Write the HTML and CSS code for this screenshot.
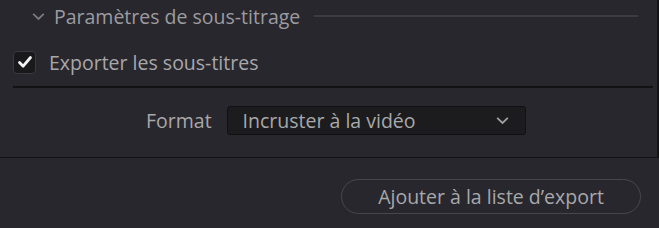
FILE: index.html
```html
<!DOCTYPE html>
<html>
<head>
    <meta charset="utf-8">
    <title>Sous-titres</title>
    <link rel="stylesheet" href="styles.css">
</head>
<body>
    <div class="panel">
        <div class="section-head">
            <svg class="chev" width="13" height="9" viewBox="0 0 13 9"><path d="M1.2 1.8 L6.5 7 L11.8 1.8" fill="none" stroke="#7a7a7e" stroke-width="1.8"/></svg>
            <span class="section-title">Paramètres de sous-titrage</span>
            <span class="section-rule"></span>
        </div>
        <label class="check-row">
            <span class="checkbox">
                <svg width="16" height="14" viewBox="0 0 16 14"><path d="M2.5 7.5 L6.2 11.2 L13.5 2.5" fill="none" stroke="#f2f2f2" stroke-width="2.8" stroke-linecap="round" stroke-linejoin="round"/></svg>
            </span>
            <span class="check-label">Exporter les sous-titres</span>
        </label>
        <div class="divider"></div>
        <div class="format-row">
            <span class="field-label">Format</span>
            <div class="select">
                <span>Incruster à la vidéo</span>
                <svg width="13" height="9" viewBox="0 0 13 9"><path d="M1.2 1.8 L6.5 7 L11.8 1.8" fill="none" stroke="#a0a0a4" stroke-width="1.8"/></svg>
            </div>
        </div>
    </div>
    <div class="footer">
        <button class="add-btn">Ajouter à la liste d’export</button>
    </div>
</body>
</html>
```

FILE: styles.css
```css
html, body {
    margin: 0;
    padding: 0;
    background-color: #28272d;
    font-family: "Open Sans", "Noto Sans", sans-serif;
    color: #a8a8ab;
    width: 659px;
    height: 228px;
    overflow: hidden;
}
.panel {
    width: 657px;
    height: 157px;
    border-right: 2px solid #141416;
    border-bottom: 1px solid #141416;
    box-sizing: content-box;
}
.section-head {
    display: flex;
    align-items: center;
    height: 32px;
    padding-left: 32px;
    padding-right: 19px;
}
.chev {
    margin-right: 9px;
    margin-top: 1px;
}
.section-title {
    font-size: 19.5px;
    color: #9c9ca0;
    white-space: nowrap;
}
.section-rule {
    flex: 1;
    height: 2px;
    background-color: #3c3c42;
    margin-left: 14px;
    margin-top: -1px;
}
.check-row {
    display: flex;
    align-items: center;
    margin-top: 19px;
    padding-left: 13px;
    height: 22px;
}
.checkbox {
    width: 21px;
    height: 21px;
    border: 1px solid #3a3a3e;
    border-radius: 4px;
    background-color: #19191b;
    display: flex;
    align-items: center;
    justify-content: center;
}
.check-label {
    font-size: 19.5px;
    margin-left: 13px;
}
.divider {
    height: 2px;
    background-color: #121214;
    margin: 13px 4px 0 13px;
}
.format-row {
    display: flex;
    align-items: center;
    margin-top: 18px;
    padding-left: 146px;
    height: 29px;
}
.field-label {
    font-size: 19.5px;
    margin-right: 15px;
}
.select {
    width: 299px;
    height: 29px;
    box-sizing: border-box;
    border: 1px solid #111113;
    border-radius: 3px;
    background-color: #1c1c1e;
    display: flex;
    align-items: center;
    justify-content: space-between;
    padding: 0 16px 0 15px;
    font-size: 19.5px;
    color: #a8a8ab;
}
.footer {
    padding: 21px 0 0 341px;
}
.add-btn {
    width: 300px;
    height: 35px;
    border: 1px solid #46464c;
    border-radius: 18px;
    background-color: transparent;
    color: #a8a8ab;
    font-family: "Open Sans", "Noto Sans", sans-serif;
    font-size: 19.5px;
    padding: 0;
}
```
